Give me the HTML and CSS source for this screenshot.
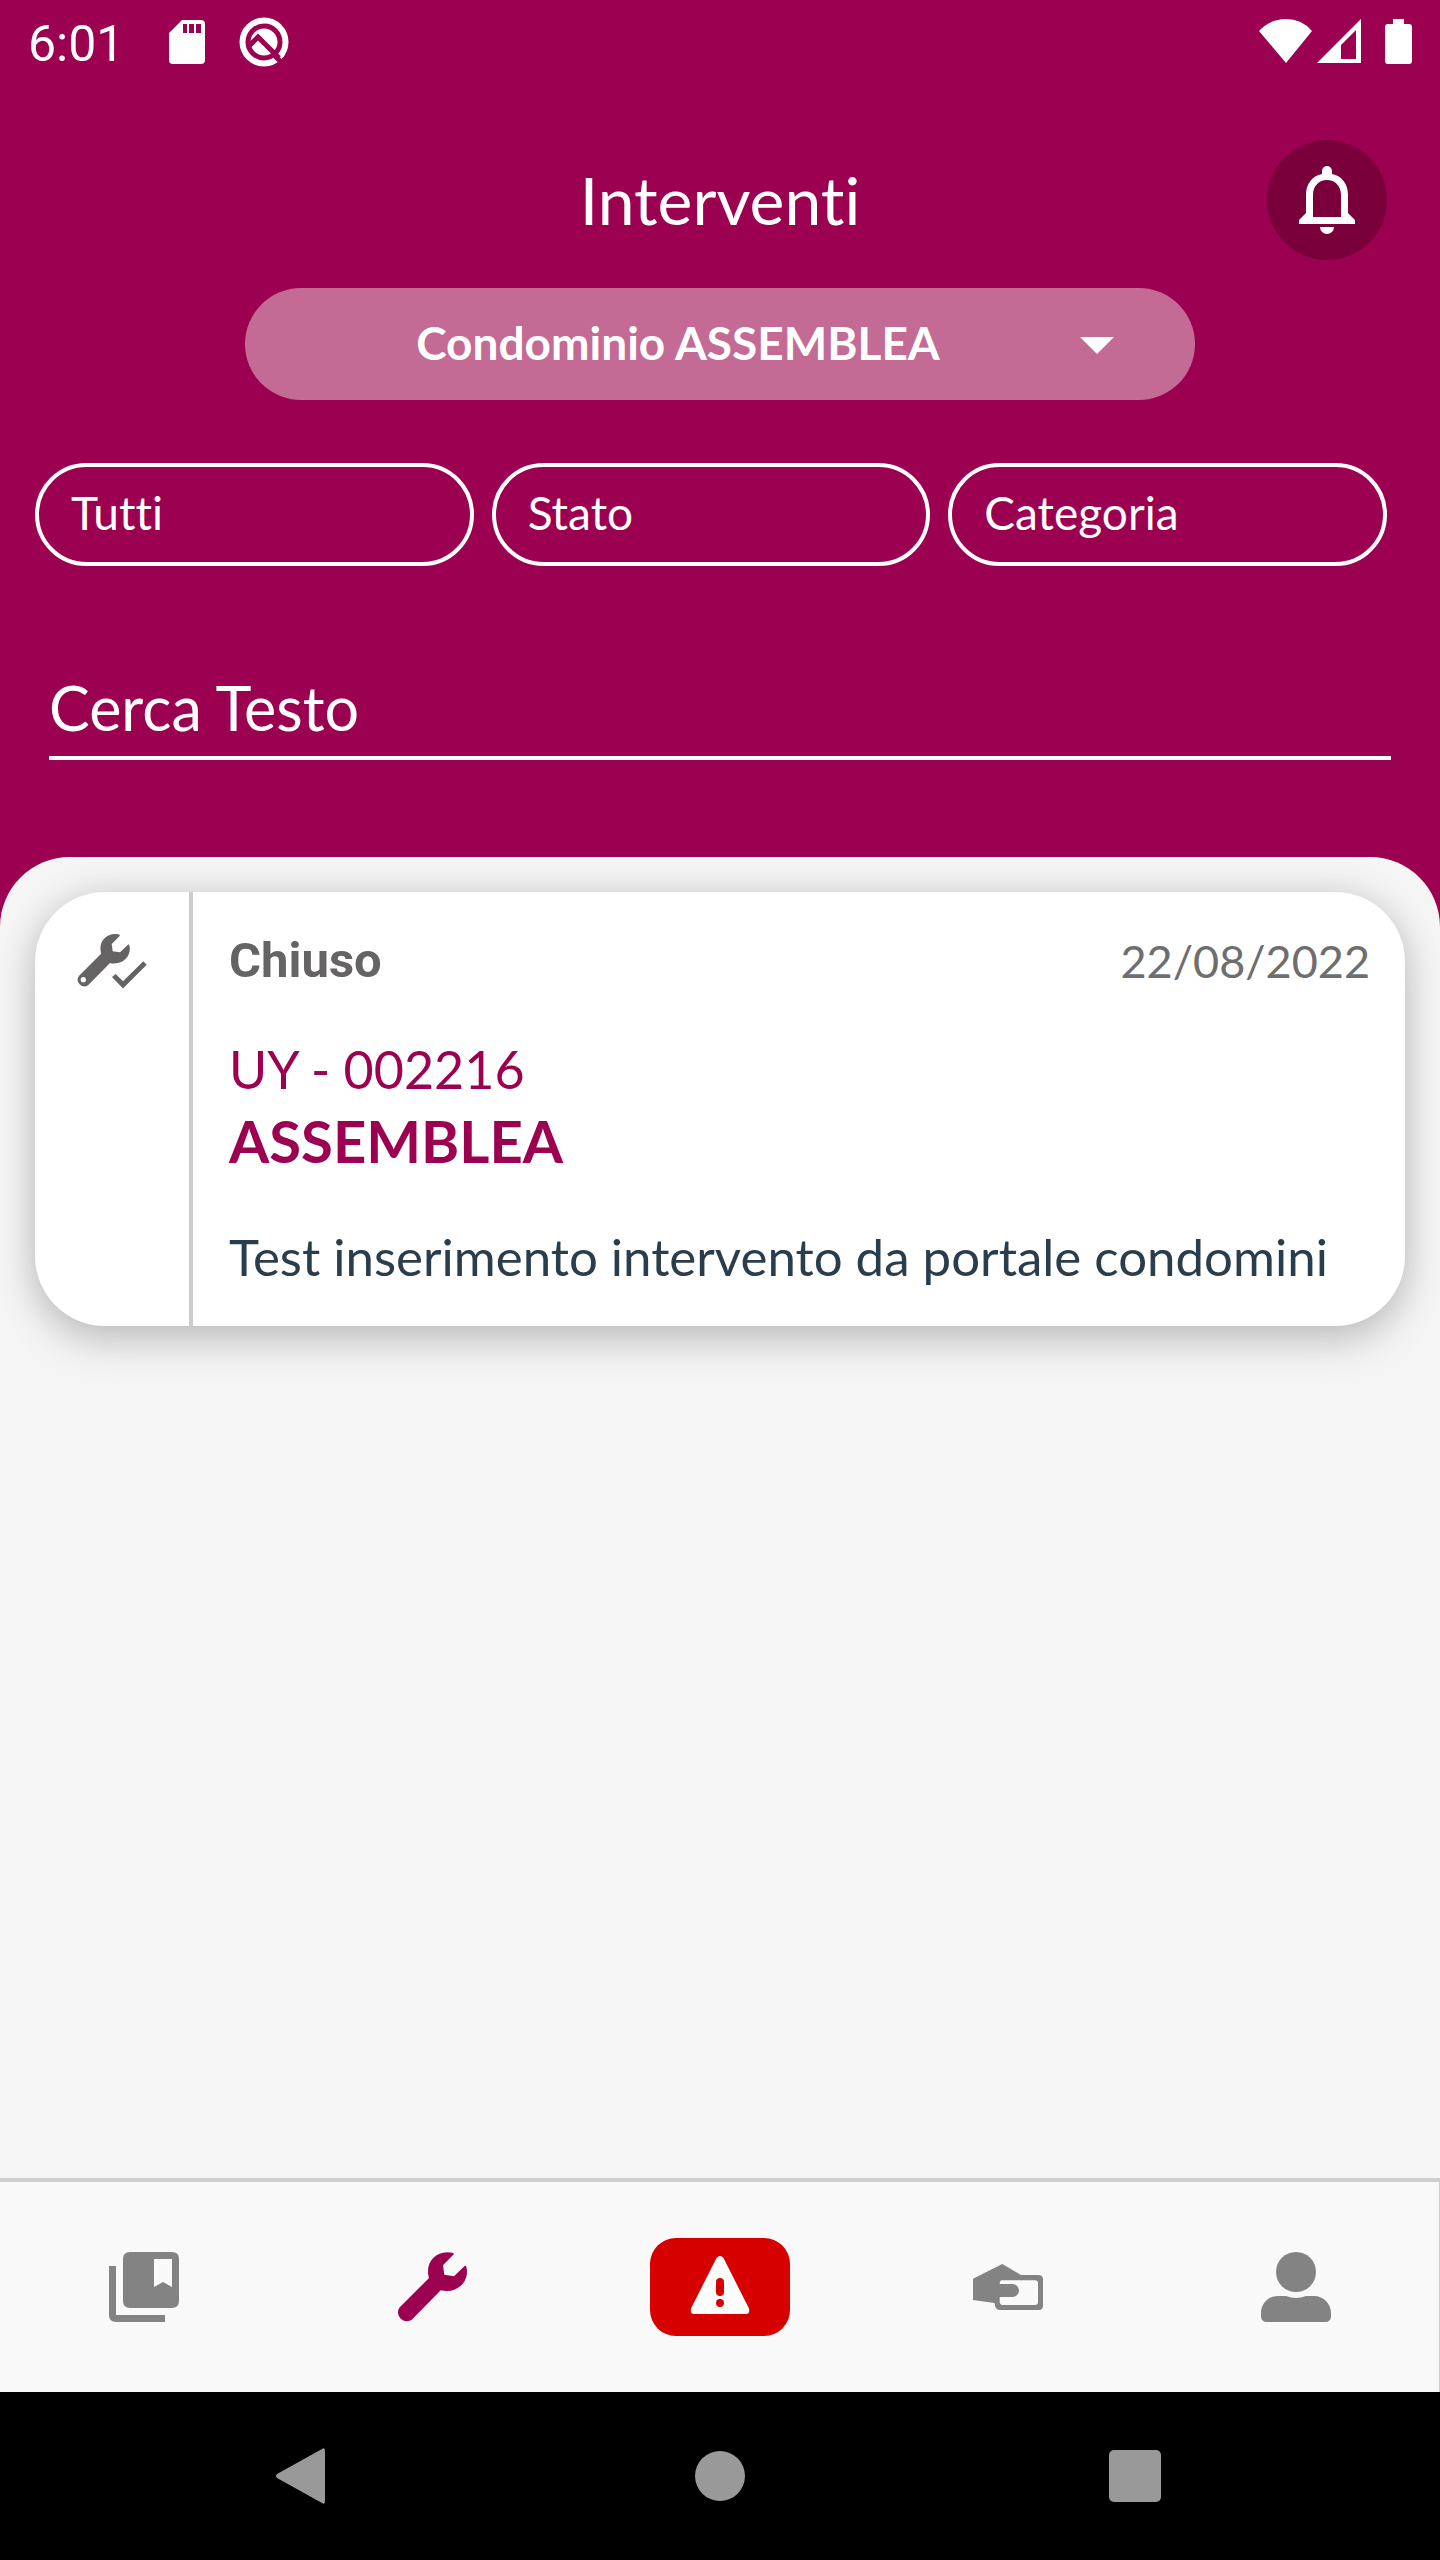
FILE: index.html
```html
<!DOCTYPE html>
<html lang="it">
<head>
    <meta charset="UTF-8">
    <meta name="viewport" content="width=device-width, initial-scale=1.0">
    <title>Interventi</title>
    <link rel="stylesheet" href="styles.css">
</head>
<body>
    <div class="status-bar">
        <div class="status-left">
            <span class="clock">6:01</span>
            <svg class="sd-icon" width="36" height="44" viewBox="0 0 36 44">
                <path fill="#fff" fill-rule="evenodd" d="M13 0H32Q36 0 36 4V40Q36 44 32 44H4Q0 44 0 40V13ZM14 4V13H18V4ZM20 4V13H25V4ZM27 4V13H32V4Z"/>
            </svg>
            <svg width="50" height="50" viewBox="0 0 50 50">
                <circle cx="25" cy="25" r="21.5" fill="none" stroke="#fff" stroke-width="6"/>
                <circle cx="25" cy="25" r="13.5" fill="#fff"/>
                <path d="M10 29L19 20L40 41" fill="none" stroke="#9c0050" stroke-width="5"/>
                <path d="M33 36L42 45" stroke="#9c0050" stroke-width="5"/>
            </svg>
        </div>
        <div class="status-right">
            <svg width="54" height="46" viewBox="0 0 54 46">
                <path fill="#fff" d="M0 12Q11 0 27 0T53 12L27 44Z"/>
            </svg>
            <svg width="44" height="46" viewBox="0 0 44 46">
                <path fill="#fff" fill-rule="evenodd" d="M44 0V44H0ZM39 11L24 26V40H39Z"/>
            </svg>
            <svg class="battery-icon" width="27" height="46" viewBox="0 0 27 46">
                <path fill="#fff" d="M8 0H19V5H24Q27 5 27 8V42Q27 45 24 45H3Q0 45 0 42V8Q0 5 3 5H8Z"/>
            </svg>
        </div>
    </div>

    <header class="header">
        <div class="title-row">
            <h1>Interventi</h1>
            <button type="button" class="bell-button" aria-label="Notifiche">
                <svg width="56" height="68" viewBox="0 0 56 68">
                    <path fill="#fff" fill-rule="evenodd" d="M23 8V5A5 5 0 0 1 33 5V8C43 10 49 18 49 29V47L56 54V58H0V54L7 47V29C7 18 13 10 23 8ZM14 51H42V29C42 20 36 14 28 14S14 20 14 29Z"/>
                    <path fill="#fff" d="M21 61H35A7 7 0 0 1 21 61Z"/>
                </svg>
            </button>
        </div>

        <div class="building-picker">
            <select class="building-select" aria-label="Condominio">
                <option>Condominio ASSEMBLEA</option>
            </select>
            <svg class="building-arrow" width="34" height="17" viewBox="0 0 34 17">
                <path fill="#fff" d="M0 0H34L17 17Z"/>
            </svg>
        </div>

        <div class="filters">
            <select class="filter" aria-label="Tutti">
                <option>Tutti</option>
            </select>
            <select class="filter" aria-label="Stato">
                <option>Stato</option>
            </select>
            <select class="filter" aria-label="Categoria">
                <option>Categoria</option>
            </select>
        </div>

        <input type="text" class="search" placeholder="Cerca Testo" aria-label="Cerca Testo">
    </header>

    <main class="content">
        <article class="card">
            <div class="card-icon">
                <svg width="70" height="56" viewBox="0 0 70 56">
                    <path fill="#656363" fill-rule="evenodd" transform="scale(0.755)" d="M56.5 2.5C57 1.5 56.5 1 55.5 .8C42 -2.5 31 7 31 19C31 21.5 31.3 24 32 26L2.5 55.5A8.8 8.8 0 0 0 15 67.5L43.7 38.3C58 42 70 32 70 20C70 18 69.8 16.5 69.3 14.8C69 13.7 68.2 13.5 67.4 14.2L57 24.3L47.3 22.7L46 13.3ZM8.4 57A3.5 3.5 0 0 1 8.4 64A3.5 3.5 0 0 1 8.4 57Z"/>
                    <path fill="#656363" d="M35 43L38.7 40L46 47.3L66.3 27.3L69.7 30.7L46 54.6Z"/>
                </svg>
            </div>
            <div class="card-body">
                <div class="card-top">
                    <span class="card-status">Chiuso</span>
                    <span class="card-date">22/08/2022</span>
                </div>
                <p class="card-code">UY - 002216</p>
                <h2>ASSEMBLEA</h2>
                <p class="card-text">Test inserimento intervento da portale condomini</p>
            </div>
        </article>
    </main>

    <nav class="tab-bar">
        <a href="#" class="tab" aria-label="Bacheca">
            <svg width="70" height="70" viewBox="0 0 70 70">
                <path fill="#838383" fill-rule="evenodd" d="M21 0H63Q70 0 70 7V49Q70 56 63 56H21Q14 56 14 49V7Q14 0 21 0ZM45 7V35L54 30L63 35V7Z"/>
                <path fill="#838383" d="M0 14H7V63H56V70H7Q0 70 0 63Z"/>
            </svg>
        </a>
        <a href="#" class="tab" aria-label="Interventi">
            <svg width="70" height="70" viewBox="0 0 70 70">
                <path fill="#9c0050" d="M56.5 2.5C57 1.5 56.5 1 55.5 .8C42 -2.5 31 7 31 19C31 21.5 31.3 24 32 26L2.5 55.5A8.8 8.8 0 0 0 15 67.5L43.7 38.3C58 42 70 32 70 20C70 18 69.8 16.5 69.3 14.8C69 13.7 68.2 13.5 67.4 14.2L57 24.3L47.3 22.7L46 13.3Z"/>
            </svg>
        </a>
        <a href="#" class="tab" aria-label="Segnala">
            <span class="alert">
                <svg width="60" height="64" viewBox="0 0 60 64">
                    <path fill="#fff" d="M26.500 3Q30 -1 33.500 3L59 53.500Q60 59 56 59H4Q0 59 1 53.500Z"/>
                    <path stroke="#d70000" stroke-width="8" stroke-linecap="round" d="M30 27V37M30 48V48.100"/>
                </svg>
            </span>
        </a>
        <a href="#" class="tab" aria-label="Pagamenti">
            <svg width="70" height="70" viewBox="0 0 70 70">
                <path fill="#838383" fill-rule="evenodd" d="M0 26.700L29.300 12L48 23H65.300Q70 23 70 27.500V53.500Q70 58 65.500 58H26.500Q22 58 21.500 51L0 48ZM26.700 32H39.500A6.500 6.500 0 0 1 39.500 45H26.700V50Q27 53 29.500 53H62Q65 53 65 50V31Q65 28.300 62 28.300H29Q26.700 28.300 26.700 32Z"/>
            </svg>
        </a>
        <a href="#" class="tab" aria-label="Profilo">
            <svg width="70" height="70" viewBox="0 0 70 70">
                <circle cx="35" cy="20" r="20" fill="#838383"/>
                <path fill="#838383" d="M17 44H25Q35 48 45 44H53C63 44 70 52 70 61V64Q70 70 64 70H6Q0 70 0 64V61C0 52 7 44 17 44Z"/>
            </svg>
        </a>
    </nav>

    <div class="system-bar">
        <button type="button" aria-label="Indietro">
            <svg width="58" height="58" viewBox="0 0 58 58">
                <path fill="#999" d="M1 27L46 2Q49 0 49 4V54Q49 58 46 56L1 31Q-1 29 1 27Z"/>
            </svg>
        </button>
        <button type="button" aria-label="Home">
            <svg width="58" height="58" viewBox="0 0 58 58">
                <circle cx="29" cy="29" r="25" fill="#999"/>
            </svg>
        </button>
        <button type="button" aria-label="Recenti">
            <svg width="58" height="58" viewBox="0 0 58 58">
                <rect x="3" y="3" width="52" height="52" rx="5" fill="#999"/>
            </svg>
        </button>
    </div>
</body>
</html>
```

FILE: styles.css
```css
* {
    margin: 0;
    padding: 0;
    box-sizing: border-box;
}

body {
    font-family: Lato, "Open Sans", sans-serif;
    font-variant-ligatures: none;
    display: flex;
    flex-direction: column;
    min-height: 100vh;
    background-color: #9c0050;
    color: #fff;
}

svg {
    display: block;
}

button,
select,
input {
    font-family: inherit;
    font-variant-ligatures: inherit;
    color: inherit;
    background: none;
    border: none;
    outline: none;
    appearance: none;
}

.status-bar {
    display: flex;
    justify-content: space-between;
    align-items: center;
    height: 84px;
    padding: 0 28px;
}

.status-left,
.status-right {
    display: flex;
    align-items: center;
}

.clock {
    padding-top: 4px;
    font-family: Roboto, sans-serif;
    font-size: 50px;
    line-height: 60px;
}

.sd-icon {
    margin: 0 34px 0 45px;
}

.status-right {
    gap: 4px;
}

.battery-icon {
    margin-left: 20px;
}

.header {
    padding: 56px 49px 97px;
}

.title-row {
    display: grid;
    grid-template-columns: 120px 1fr 120px;
    align-items: center;
    margin: 0 4px;
}

.title-row h1 {
    grid-column: 2;
    font-size: 66px;
    font-weight: 400;
    line-height: 80px;
    text-align: center;
}

.bell-button {
    display: flex;
    justify-content: center;
    align-items: center;
    width: 120px;
    height: 120px;
    border-radius: 50%;
    background-color: #7a003c;
}

.building-picker {
    position: relative;
    margin: 28px 196px 0;
}

.building-select {
    display: block;
    width: 100%;
    height: 112px;
    padding: 0 84px 4px 0;
    border-radius: 56px;
    background-color: #c36a95;
    font-size: 46px;
    font-weight: 700;
    text-align: center;
    text-align-last: center;
}

.building-arrow {
    position: absolute;
    top: 49px;
    right: 81px;
    pointer-events: none;
}

.filters {
    display: grid;
    grid-template-columns: repeat(3, 1fr);
    gap: 18px;
    margin: 63px 4px 0 -14px;
}

.filter {
    height: 103px;
    padding: 0 32px 4px;
    border: 4px solid #fff;
    border-radius: 52px;
    font-size: 46px;
}

.search {
    display: block;
    width: 100%;
    height: 108px;
    margin-top: 86px;
    padding-top: 6px;
    border-bottom: 4px solid #fff;
    font-size: 61px;
}

.search::placeholder {
    color: #fff;
    opacity: 1;
}

.content {
    flex: 1;
    padding: 35px;
    border-radius: 70px 70px 0 0;
    background-color: #f5f5f5;
}

.card {
    display: flex;
    border-radius: 70px;
    background-color: #fff;
    box-shadow: 0 18px 40px rgba(0, 0, 0, 0.16), 0 0 36px rgba(0, 0, 0, 0.12);
}

.card-icon {
    width: 158px;
    padding: 42px 0 0 42px;
    border-right: 4px solid #ccc;
}

.card-body {
    flex: 1;
    padding: 35px 35px 35px 36px;
}

.card-top {
    display: flex;
    justify-content: space-between;
    align-items: center;
    line-height: 68px;
    margin-bottom: 38px;
}

.card-status {
    font-family: Roboto, sans-serif;
    font-size: 49px;
    font-weight: 700;
    color: #656363;
}

.card-date {
    font-size: 45px;
    color: #6e6e6e;
}

.card-code {
    font-size: 52px;
    line-height: 72px;
    color: #9c0050;
}

.card h2 {
    font-size: 58px;
    font-weight: 700;
    line-height: 72px;
    color: #9c0050;
}

.card-text {
    margin-top: 46px;
    font-size: 51px;
    line-height: 68px;
    color: #2a3d4c;
}

.tab-bar {
    display: grid;
    grid-template-columns: repeat(5, 1fr);
    height: 214px;
    border-top: 4px solid #cecece;
    background-color: #f9f9f9;
    box-shadow: inset -1px 0 #cecece;
}

.tab {
    display: flex;
    justify-content: center;
    align-items: center;
}

.alert {
    display: flex;
    justify-content: center;
    align-items: center;
    width: 140px;
    height: 98px;
    border-radius: 26px;
    background-color: #d70000;
}

.system-bar {
    display: grid;
    grid-template-columns: repeat(3, 1fr);
    height: 168px;
    padding: 0 97px;
    background-color: #000;
}

.system-bar button {
    display: flex;
    justify-content: center;
    align-items: center;
}
```
